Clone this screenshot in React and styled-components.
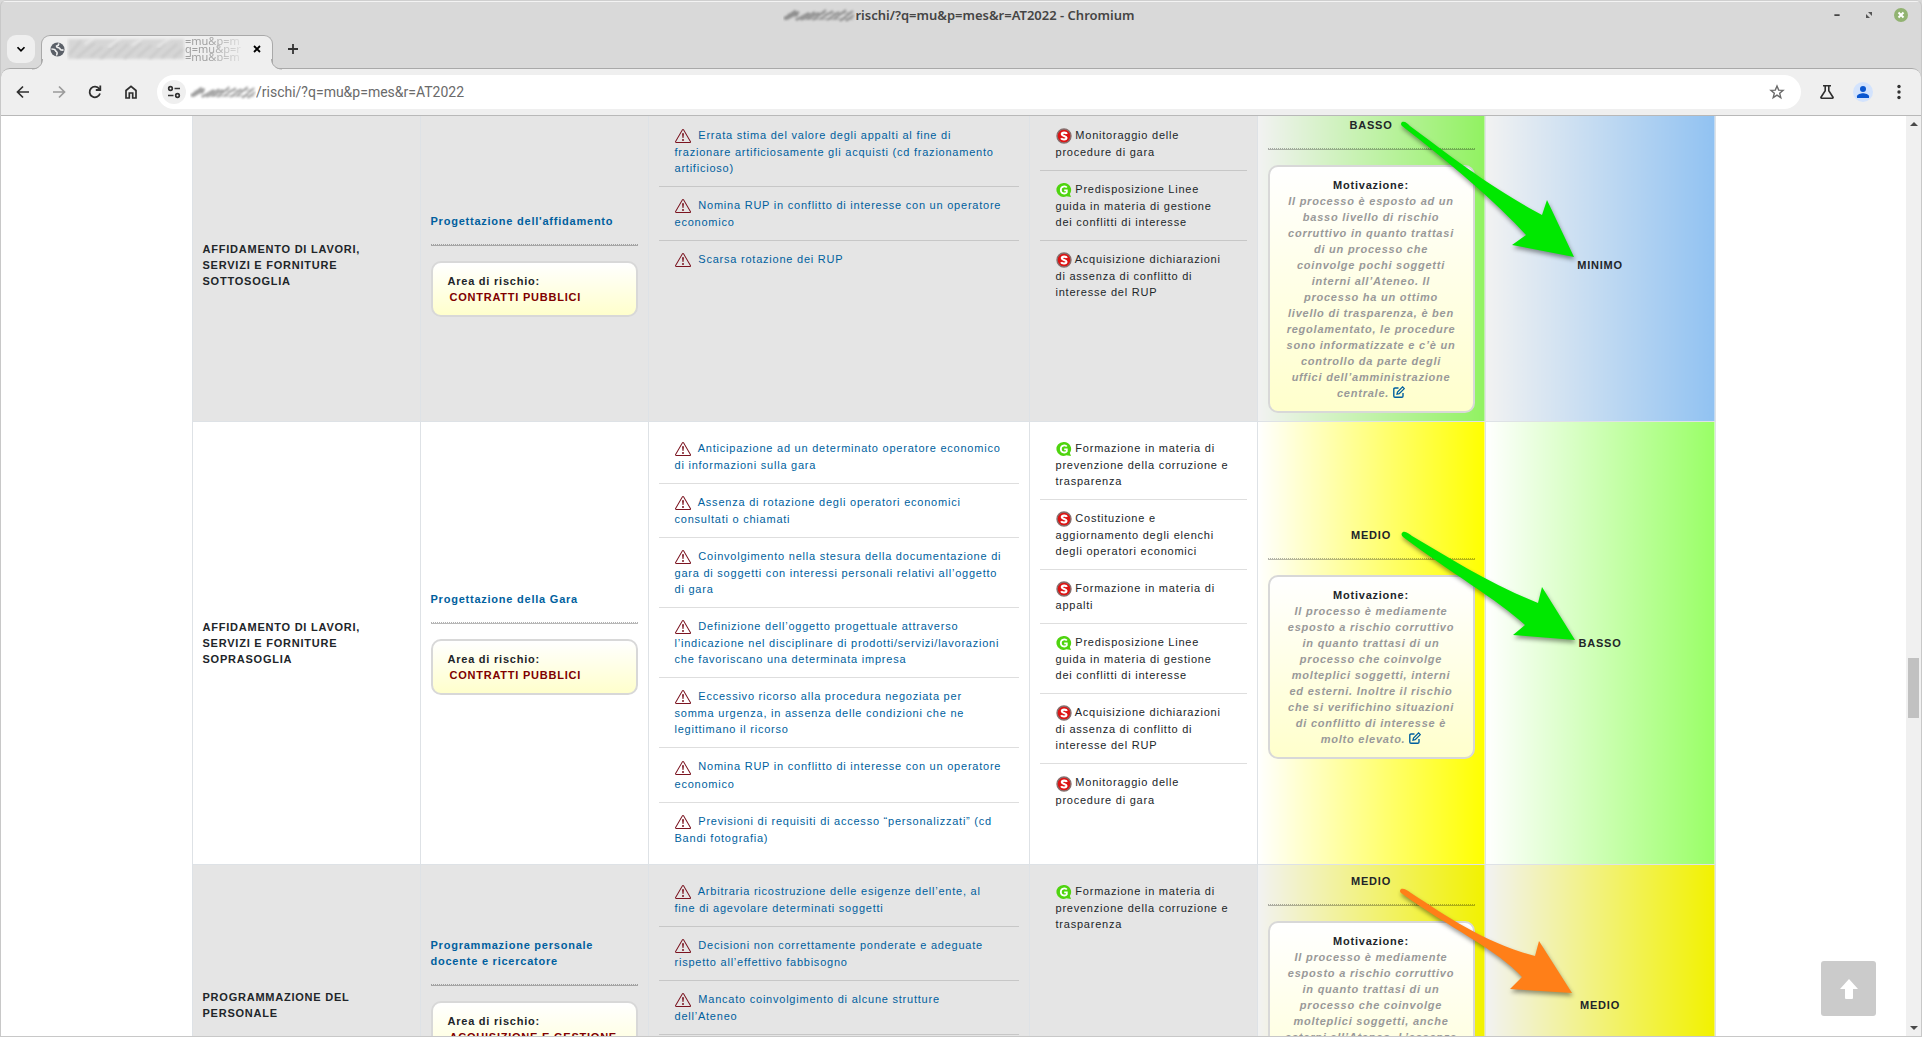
import React from "react";
import styled, { createGlobalStyle, css } from "styled-components";

const GlobalStyle = createGlobalStyle`
  * { box-sizing: border-box; }
  html, body, #root { height: 100%; }
  body { margin: 0; overflow: hidden; background: #d9d9d9; }
  button { padding: 0; border: 0; background: none; color: inherit; font: inherit; cursor: pointer; }
  a { text-decoration: none; }
`;

const uiFont = css`font-family: "Noto Sans", "Open Sans", sans-serif;`;

/* ---------- browser window ---------- */

const Window = styled.div`
  ${uiFont}
  height: 100vh;
  display: flex;
  flex-direction: column;
  background: #d9d9d9;
  border: 1px solid #c8c8c8;
  border-top-color: #cfcfcf;
  border-radius: 6px 6px 0 0;
  overflow: hidden;
`;

const TitleBar = styled.header`
  display: grid;
  grid-template-columns: 1fr auto 1fr;
  align-items: center;
  height: 27px;
  padding-right: 4px;
  border-top: 1px solid #f3f3f3;
  color: #454545;
`;

const Title = styled.h1`
  grid-column: 2;
  display: flex;
  align-items: center;
  margin: 0;
  font-size: 13px;
  line-height: 18px;
  font-weight: 600;
  white-space: nowrap;
`;

const WindowControls = styled.div`
  display: flex;
  justify-content: flex-end;
  gap: 18px;
  padding-right: 9px;
`;

const ControlButton = styled.button`
  display: grid;
  place-items: center;
  width: 14px;
  height: 14px;
`;

const TabStrip = styled.nav`
  display: flex;
  align-items: center;
  height: 40px;
  padding: 7px 0 0 6px;
`;

const TabSearch = styled.button`
  display: grid;
  place-items: center;
  width: 28px;
  height: 28px;
  margin-bottom: 5px;
  border-radius: 9px;
  background: #efefef;
`;

const Tab = styled.div`
  position: relative;
  z-index: 1;
  display: flex;
  align-items: center;
  gap: 2px;
  width: 232px;
  height: 34px;
  margin: 0 12px 0 6px;
  padding: 0 7px 6px 8px;
  border: 1px solid #a9a9a9;
  border-bottom: 0;
  border-radius: 9px 9px 0 0;
  background: #efefef;
`;

const TabFoot = styled.svg`
  position: absolute;
  bottom: -1px;
  ${(p) => (p.$side === "left" ? "left: -10px;" : "right: -10px; transform: scaleX(-1);")}
`;

const TabTitle = styled.div`
  display: flex;
  flex: 1;
  align-items: center;
  color: #a0a0a0;
  font-size: 11px;
`;

const TabTitleText = styled.span`
  white-space: nowrap;
  line-height: 8px;
  mask-image: linear-gradient(90deg, #000 40%, rgba(0, 0, 0, 0.2));
`;

const SmallButton = styled.button`
  display: grid;
  place-items: center;
  width: 16px;
  height: 28px;
`;

const NewTab = styled(SmallButton)`
  margin-bottom: 6px;
  color: #333;
`;

const Toolbar = styled.div`
  display: flex;
  align-items: center;
  height: 48px;
  padding: 0 10px 0 10px;
  border-top: 1px solid #a9a9a9;
  border-bottom: 1px solid #b8b8b8;
  border-radius: 9px 9px 0 0;
  background: #efefef;
`;

const ToolButton = styled.button`
  display: grid;
  place-items: center;
  width: 24px;
  height: 24px;
  margin-right: 12px;
  color: ${(p) => (p.$dim ? "#9b9b9b" : "#2f2f2f")};
  &:last-child { margin-right: 0; }
`;

const AddressBar = styled.form`
  display: flex;
  flex: 1;
  align-items: center;
  height: 34px;
  margin: 0 14px 0 2px;
  padding: 0 12px 0 5px;
  border-radius: 17px;
  background: #fff;
`;

const SiteButton = styled.button`
  display: grid;
  place-items: center;
  width: 24px;
  height: 24px;
  margin-right: 4px;
  border-radius: 12px;
  background: #efefef;
`;

const AddressInput = styled.input`
  flex: 1;
  min-width: 0;
  padding: 0;
  border: 0;
  outline: 0;
  background: none;
  color: #6a6a6a;
  font-family: Roboto, "Noto Sans", sans-serif;
  font-size: 14px;
  line-height: 20px;
`;

const StarButton = styled.button`
  display: grid;
  place-items: center;
  width: 24px;
  height: 24px;
  color: #6a6a6a;
`;

/* ---------- page ---------- */

const Viewport = styled.div`
  display: flex;
  flex: 1;
  min-height: 0;
  background: #fff;
`;

const Page = styled.main`
  position: relative;
  flex: 1;
  overflow: hidden;
`;

const ScrollTrack = styled.div`
  display: flex;
  flex-direction: column;
  align-items: center;
  width: 15px;
  padding: 6px 0;
  background: #f0f0f0;
`;

const ScrollThumb = styled.div`
  width: 11px;
  height: 60px;
  background: #c1c1c1;
`;

const Spacer = styled.div`
  flex: ${(p) => p.$grow};
`;

const ScrollArrow = styled.div`
  width: 0;
  height: 0;
  border: 4px solid transparent;
  border-width: ${(p) => (p.$down ? "4px 4px 0" : "0 4px 4px")};
  border-${(p) => (p.$down ? "top" : "bottom")}-color: #4a4a4a;
`;

const BackToTop = styled.button`
  position: absolute;
  right: 30px;
  bottom: 20px;
  display: grid;
  place-items: center;
  width: 55px;
  height: 55px;
  border-radius: 3px;
  background: #cbcbcb;
`;

const RiskTable = styled.table`
  width: 80%;
  margin: -8px auto 0;
  border-collapse: collapse;
  table-layout: fixed;
  color: #212529;
  font-family: "Liberation Sans", Arial, sans-serif;
  font-size: 11px;
  line-height: 16px;
  letter-spacing: 0.07em;
`;

/* Columns are shares of the table, rounded down so that borders stay crisp;
   the last column takes what is left. */
const Column = styled.col`
  width: ${(p) => (p.$share ? `round(down, calc((100vw - 17px) * 0.8 * ${p.$share}), 1px)` : "auto")};
`;

const Row = styled.tr`
  background: ${(p) => (p.$shaded ? "#e5e5e5" : "#fff")};
`;

const cell = css`
  padding: 8px 10px;
  border: 1px solid #dee2e6;
  vertical-align: middle;
  text-align: left;
`;

const HeadCell = styled.th`
  ${cell}
  font-weight: 700;
`;

const Cell = styled.td`
  ${cell}
`;

const ListCell = styled(Cell)`
  vertical-align: top;
`;

const LEVELS = {
  plain: { minimo: "#99ccff", basso: "#99ff66", medio: "#ffff00" },
  shaded: { minimo: "#91c2f2", basso: "#91f261", medio: "#f2f200" },
};

const LevelCell = styled(Cell)`
  position: relative;
  text-align: center;
  font-weight: 700;
  background: linear-gradient(
    90deg,
    ${(p) => (p.$shaded ? "#f2f2f2" : "#fff")},
    ${(p) => LEVELS[p.$shaded ? "shaded" : "plain"][p.$level]}
  );
`;

const Rule = styled.hr`
  height: 2px;
  margin: 15px 0;
  border: 0;
  border-top: 1px dotted rgba(0, 0, 0, 0.3);
  border-bottom: 1px solid rgba(0, 0, 0, 0.27);
`;

const Card = styled.div`
  padding: 10px 15px;
  border: 2px solid #d8d8d8;
  border-radius: 10px;
  background: linear-gradient(#fff, #ffffcc);
  font-weight: 700;
`;

const Area = styled.div`
  padding-left: 2px;
  color: #800000;
`;

const Reason = styled.em`
  display: block;
  color: #999;
`;

const ProcessLink = styled.a`
  color: #005f9e;
  font-weight: 700;
`;

const List = styled.ul`
  margin: 0;
  padding: 0;
  list-style: none;
`;

const Item = styled.li`
  padding: 10px 16px;
  border-bottom: 1px solid rgba(0, 0, 0, 0.13);
  &:last-child { border-bottom: 0; }
  svg { vertical-align: middle; margin-right: ${(p) => p.$gap}px; }
`;

const RiskLink = styled.a`
  color: #005f9e;
`;

const EditLink = styled.a`
  color: #005f9e;
  svg { vertical-align: -1px; }
`;

const ArrowLayer = styled.svg`
  position: absolute;
  left: 140px;
  top: ${(p) => p.$top}px;
  z-index: 2;
  overflow: visible;
  pointer-events: none;
  filter: drop-shadow(1px 3px 2px rgba(0, 0, 0, 0.4));
`;

/* ---------- drawings ---------- */

const WarningIcon = () => (
  <svg width="16" height="16" viewBox="0 0 16 16" fill="#7b1420" aria-hidden="true">
    <path d="M7.938 2.016A.13.13 0 0 1 8.002 2a.13.13 0 0 1 .063.016.15.15 0 0 1 .054.057l6.857 11.667c.036.06.035.124.002.183a.2.2 0 0 1-.054.06.1.1 0 0 1-.066.017H1.146a.1.1 0 0 1-.066-.017.2.2 0 0 1-.054-.06.18.18 0 0 1 .002-.183L7.884 2.073a.15.15 0 0 1 .054-.057m1.044-.45a1.13 1.13 0 0 0-1.96 0L.165 13.233c-.457.778.091 1.767.98 1.767h13.713c.889 0 1.438-.99.98-1.767z" />
    <path d="M7.002 12a1 1 0 1 1 2 0 1 1 0 0 1-2 0M7.1 5.995a.905.905 0 1 1 1.8 0l-.35 3.507a.552.552 0 0 1-1.1 0z" />
  </svg>
);

const SpecificIcon = () => (
  <svg width="16" height="16" viewBox="0 0 16 16" aria-label="Misura specifica">
    <circle cx="8" cy="8" r="7" fill="#dd1414" stroke="#85706f" strokeWidth="1.400" />
    <path d="M10.900 5.800C10.200 4.200 5.800 4.100 5.800 6.200 5.800 8.300 10.500 7.500 10.500 9.800 10.500 11.900 6 11.900 5.100 10.200" fill="none" stroke="#fff" strokeWidth="2.100" />
  </svg>
);

const GeneralIcon = () => (
  <svg width="16" height="16" viewBox="0 0 16 16" aria-label="Misura generale">
    <path d="M7.500 1a7 7 0 1 0 3 13.300L15 15l-1.200-3A7 7 0 0 0 7.500 1z" fill="#4fd40f" />
    <path d="M10.800 5.600C9.600 3.700 4.800 4 4.800 8s4.800 4.200 6 2.200V8.300H8.200" fill="none" stroke="#fff" strokeWidth="1.800" />
  </svg>
);

const EditIcon = () => (
  <svg width="12" height="12" viewBox="0 0 12 12" fill="none" stroke="currentColor" strokeWidth="1.4" aria-label="Modifica">
    <path d="M5.500 2H2a1.200 1.200 0 0 0-1.200 1.200V10A1.200 1.200 0 0 0 2 11.200h6.800A1.200 1.200 0 0 0 10 10V7" />
    <path d="M4 8.200l.5-2.200L9.600.9l1.700 1.700L6.200 7.700z" strokeWidth="1.300" />
  </svg>
);

const ARROWS = {
  steep: "M4 4C7 3 9 5 12 8C50 36 90 68 144 97L149 82L176 139L114 127L128 117C100 86 50 43 4 8Q2 6 4 4Z",
  flat: "M5 2C8 1 11 4 14 6C50 27 90 53 140 73L144 57L177 110L115 105L127 95C100 70 50 41 5 7Q2 4 5 2Z",
  low: "M3 3C6 2 9 4 13 7C50 31 85 56 137 70L141 55L174 107L112 103L124 91C100 64 50 41 3 7Q1 5 3 3Z",
};

const Arrow = ({ shape, color, top }) => (
  <ArrowLayer $top={top} width="180" height="142" aria-hidden="true">
    <path d={ARROWS[shape]} fill={color} />
  </ArrowLayer>
);

const Smudge = ({ width, height, id, tone }) => (
  <svg width={width} height={height} viewBox="0 0 72 16" preserveAspectRatio="none" aria-hidden="true">
    <filter id={id} x="-10%" y="-20%" width="120%" height="140%">
      <feGaussianBlur stdDeviation="1" />
    </filter>
    <g filter={`url(#${id})`} stroke={tone} strokeWidth="2" fill="none" opacity="0.75">
      <path d="M1 12L13 4M3 12L16 5M5 8h10" strokeWidth="3" />
      <path d="M13 13L26 6M18 13L32 5M24 12L36 6M30 13L43 3M37 12L50 4M44 13L56 5M51 12L63 3M57 14L70 4M63 14L71 8" />
      <path d="M12 12H70M26 7L68 6" opacity="0.5" />
    </g>
  </svg>
);

const TabSmudge = () => (
  <svg width="118" height="28" viewBox="0 0 120 28" aria-hidden="true">
    <filter id="smudge-tab" x="-5%" y="-10%" width="110%" height="120%">
      <feGaussianBlur stdDeviation="1.500" />
    </filter>
    <rect x="1" y="4" width="118" height="20" fill="#d6d6d6" filter="url(#smudge-tab)" />
    <g filter="url(#smudge-tab)" stroke="#c6c6c6" strokeWidth="2" fill="none">
      <path d="M2 20L14 6M10 23L28 8M24 22L36 12M34 24L52 8M48 22L62 9M58 24L76 7M72 22L86 10M84 24L100 8M96 23L112 9M108 23L118 14" />
    </g>
    <g filter="url(#smudge-tab)" stroke="#efefef" strokeWidth="2" fill="none">
      <path d="M18 9L27 3M42 12L54 3M66 10L76 4M92 12L104 3" />
    </g>
  </svg>
);

const Globe = () => (
  <svg width="15" height="15" viewBox="0 0 16 16" aria-hidden="true">
    <circle cx="8" cy="8" r="7.500" fill="#5b6068" />
    <path d="M9 1.500c.8 1.500-.5 2.500-2 2.800-.3 1.400 1 1.700 2.300 1.900 1.700.4 1.300 2.300 3 2.400 1 .1 1.700-.2 2-.6M1.500 7.500c1.800 0 4 .2 4.500 1.800.3 1.200 1.800 1 1.600 2.600-.1 1-.6 1.700-.4 2.500" fill="none" stroke="#efefef" strokeWidth="1.700" />
  </svg>
);

const Stroke = ({ d, size = 16, width = 2 }) => (
  <svg width={size} height={size} viewBox="0 0 16 16" fill="none" stroke="currentColor" strokeWidth={width} aria-hidden="true">
    <path d={d} />
  </svg>
);

const Foot = ({ side }) => (
  <TabFoot $side={side} width="11" height="11" viewBox="0 0 11 11" aria-hidden="true">
    <path d="M0 11V10.500C6 10.500 10.500 6 10.500 0H11V11Z" fill="#efefef" />
    <path d="M0 10C6 10 10.500 6 10.500 0" fill="none" stroke="#a9a9a9" />
  </TabFoot>
);

/* ---------- data ---------- */

const ROWS = [
  {
    shaded: true,
    macro: "AFFIDAMENTO DI LAVORI, SERVIZI E FORNITURE SOTTOSOGLIA",
    process: "Progettazione dell'affidamento",
    area: "CONTRATTI PUBBLICI",
    risks: [
      "Errata stima del valore degli appalti al fine di frazionare artificiosamente gli acquisti (cd frazionamento artificioso)",
      "Nomina RUP in conflitto di interesse con un operatore economico",
      "Scarsa rotazione dei RUP",
    ],
    measures: [
      ["S", "Monitoraggio delle procedure di gara"],
      ["G", "Predisposizione Linee guida in materia di gestione dei conflitti di interesse"],
      ["S", "Acquisizione dichiarazioni di assenza di conflitto di interesse del RUP"],
    ],
    before: "basso",
    after: "minimo",
    reason:
      "Il processo è esposto ad un basso livello di rischio corruttivo in quanto trattasi di un processo che coinvolge pochi soggetti interni all’Ateneo. Il processo ha un ottimo livello di trasparenza, è ben regolamentato, le procedure sono informatizzate e c’è un controllo da parte degli uffici dell’amministrazione centrale.",
    arrow: { shape: "steep", color: "#00e800", top: 9 },
  },
  {
    shaded: false,
    macro: "AFFIDAMENTO DI LAVORI, SERVIZI E FORNITURE SOPRASOGLIA",
    process: "Progettazione della Gara",
    area: "CONTRATTI PUBBLICI",
    risks: [
      "Anticipazione ad un determinato operatore economico di informazioni sulla gara",
      "Assenza di rotazione degli operatori economici consultati o chiamati",
      "Coinvolgimento nella stesura della documentazione di gara di soggetti con interessi personali relativi all’oggetto di gara",
      "Definizione dell’oggetto progettuale attraverso l’indicazione nel disciplinare di prodotti/servizi/lavorazioni che favoriscano una determinata impresa",
      "Eccessivo ricorso alla procedura negoziata per somma urgenza, in assenza delle condizioni che ne legittimano il ricorso",
      "Nomina RUP in conflitto di interesse con un operatore economico",
      "Previsioni di requisiti di accesso “personalizzati” (cd Bandi fotografia)",
    ],
    measures: [
      ["G", "Formazione in materia di prevenzione della corruzione e trasparenza"],
      ["S", "Costituzione e aggiornamento degli elenchi degli operatori economici"],
      ["S", "Formazione in materia di appalti"],
      ["G", "Predisposizione Linee guida in materia di gestione dei conflitti di interesse"],
      ["S", "Acquisizione dichiarazioni di assenza di conflitto di interesse del RUP"],
      ["S", "Monitoraggio delle procedure di gara"],
    ],
    before: "medio",
    after: "basso",
    reason:
      "Il processo è mediamente esposto a rischio corruttivo in quanto trattasi di un processo che coinvolge molteplici soggetti, interni ed esterni. Inoltre il rischio che si verifichino situazioni di conflitto di interesse è molto elevato.",
    arrow: { shape: "flat", color: "#00e800", top: 108 },
  },
  {
    shaded: true,
    macro: "PROGRAMMAZIONE DEL PERSONALE",
    process: "Programmazione personale docente e ricercatore",
    area: "ACQUISIZIONE E GESTIONE DEL PERSONALE",
    risks: [
      "Arbitraria ricostruzione delle esigenze dell’ente, al fine di agevolare determinati soggetti",
      "Decisioni non correttamente ponderate e adeguate rispetto all’effettivo fabbisogno",
      "Mancato coinvolgimento di alcune strutture dell’Ateneo",
      "Scarsa trasparenza",
    ],
    measures: [["G", "Formazione in materia di prevenzione della corruzione e trasparenza"]],
    before: "medio",
    after: "medio",
    reason:
      "Il processo è mediamente esposto a rischio corruttivo in quanto trattasi di un processo che coinvolge molteplici soggetti, anche esterni all’Ateneo. L’assenza di criteri definiti può incidere sulle scelte, ma le decisioni sono prese da organi collegiali e gli atti sono pubblici.",
    arrow: { shape: "low", color: "#ff7f18", top: 21 },
  },
];

const RiskRow = ({ row }) => (
  <Row $shaded={row.shaded}>
    <HeadCell scope="row">{row.macro}</HeadCell>
    <Cell>
      <ProcessLink href="#processo">{row.process}</ProcessLink>
      <Rule />
      <Card>
        Area di rischio:
        <Area>{row.area}</Area>
      </Card>
    </Cell>
    <ListCell>
      <List>
        {row.risks.map((risk) => (
          <Item key={risk} $gap={4}>
            <WarningIcon /> <RiskLink href="#rischio">{risk}</RiskLink>
          </Item>
        ))}
      </List>
    </ListCell>
    <ListCell>
      <List>
        {row.measures.map(([kind, text]) => (
          <Item key={text} $gap={0}>
            {kind === "S" ? <SpecificIcon /> : <GeneralIcon />} {text}
          </Item>
        ))}
      </List>
    </ListCell>
    <LevelCell $shaded={row.shaded} $level={row.before}>
      {row.before.toUpperCase()}
      <Rule />
      <Card>
        Motivazione:
        <Reason>
          {row.reason}{" "}
          <EditLink href="#modifica"><EditIcon /></EditLink>
        </Reason>
      </Card>
      <Arrow {...row.arrow} />
    </LevelCell>
    <LevelCell $shaded={row.shaded} $level={row.after}>{row.after.toUpperCase()}</LevelCell>
  </Row>
);

export default function App() {
  return (
    <>
      <GlobalStyle />
      <Window>
        <TitleBar>
          <Title>
            <Smudge id="smudge-title" width={72} height={16} tone="#777" />
            rischi/?q=mu&amp;p=mes&amp;r=AT2022 - Chromium
          </Title>
          <WindowControls>
            <ControlButton aria-label="Riduci a icona"><Stroke d="M5 8h6" size={14} /></ControlButton>
            <ControlButton aria-label="Ingrandisci">
              <svg width="14" height="14" viewBox="0 0 14 14" fill="#555" aria-hidden="true">
                <path d="M6 4h4v4zM4 6v4h4z" />
              </svg>
            </ControlButton>
            <ControlButton aria-label="Chiudi">
              <svg width="14" height="14" viewBox="0 0 14 14" aria-hidden="true">
                <circle cx="7" cy="7" r="7" fill="#92b372" />
                <path d="M4.500 4.500l5 5M9.500 4.500l-5 5" stroke="#fff" strokeWidth="2" />
              </svg>
            </ControlButton>
          </WindowControls>
        </TitleBar>
        <TabStrip>
          <TabSearch aria-label="Cerca schede"><Stroke d="M4 6L8 10l4-4" size={14} /></TabSearch>
          <Tab>
            <Foot side="left" />
            <Globe />
            <TabTitle>
              <TabSmudge />
              <TabTitleText>=mu&amp;p=m<br />q=mu&amp;p=r<br />=mu&amp;p=m</TabTitleText>
            </TabTitle>
            <SmallButton aria-label="Chiudi scheda"><Stroke d="M4 4l8 8M12 4l-8 8" size={12} width={2.4} /></SmallButton>
            <Foot side="right" />
          </Tab>
          <NewTab aria-label="Nuova scheda"><Stroke d="M8 3v10M3 8h10" width={1.800} /></NewTab>
        </TabStrip>
        <Toolbar>
          <ToolButton aria-label="Indietro"><Stroke d="M14 8H3M8 2.500L2.500 8L8 13.500" width={1.700} /></ToolButton>
          <ToolButton $dim aria-label="Avanti"><Stroke d="M2 8h11M8 2.500L13.500 8L8 13.500" width={1.700} /></ToolButton>
          <ToolButton aria-label="Ricarica"><Stroke d="M13 9.500A5.300 5.300 0 1 1 12.300 5M13.300 1.500V6H8.800" width={1.800} /></ToolButton>
          <ToolButton aria-label="Pagina iniziale"><Stroke d="M3 14V6.500L8 2.300l5 4.200V14H9.700V9H6.300v5Z" width={1.700} /></ToolButton>
          <AddressBar onSubmit={(e) => e.preventDefault()}>
            <SiteButton type="button" aria-label="Informazioni sul sito">
              <svg width="16" height="16" viewBox="0 0 16 16" fill="none" stroke="#333" strokeWidth="1.700" aria-hidden="true">
                <circle cx="4.500" cy="4.500" r="1.800" /><path d="M8.500 4.500H14M2 11.500h5.500" /><circle cx="11.500" cy="11.500" r="1.800" />
              </svg>
            </SiteButton>
            <Smudge id="smudge-url" width={66} height={16} tone="#808080" />
            <AddressInput aria-label="Indirizzo" defaultValue="/rischi/?q=mu&p=mes&r=AT2022" />
            <StarButton type="button" aria-label="Aggiungi ai preferiti">
              <Stroke d="M8 2l1.700 4.100 4.400.3-3.400 2.900 1.100 4.300L8 11.200l-3.800 2.400 1.100-4.300L1.900 6.400l4.400-.3Z" width={1.400} />
            </StarButton>
          </AddressBar>
          <ToolButton aria-label="Esperimenti"><Stroke d="M4 1.800h8M6.200 2v4.800L2 13.200c-.3.600 0 1 .6 1h10.800c.6 0 .9-.4.600-1L9.800 6.800V2" width={1.600} /></ToolButton>
          <ToolButton aria-label="Profilo">
            <svg width="20" height="20" viewBox="0 0 20 20" aria-hidden="true">
              <circle cx="10" cy="10" r="10" fill="#d3e3fd" />
              <circle cx="10" cy="7" r="3" fill="#0b57d0" />
              <path d="M4 16v-1.700C4 12.200 8 11.300 10 11.300s6 .9 6 3V16z" fill="#0b57d0" />
            </svg>
          </ToolButton>
          <ToolButton aria-label="Menu">
            <svg width="16" height="16" viewBox="0 0 16 16" fill="#333" aria-hidden="true">
              <circle cx="8" cy="2.500" r="1.700" /><circle cx="8" cy="8" r="1.700" /><circle cx="8" cy="13.500" r="1.700" />
            </svg>
          </ToolButton>
        </Toolbar>
        <Viewport>
          <Page>
            <RiskTable>
              <colgroup>
                <Column $share={0.15} />
                <Column $share={0.15} />
                <Column $share={0.25} />
                <Column $share={0.15} />
                <Column $share={0.15} />
                <Column />
              </colgroup>
              <tbody>
                {ROWS.map((row) => <RiskRow key={row.macro} row={row} />)}
              </tbody>
            </RiskTable>
            <BackToTop aria-label="Torna su">
              <svg width="18" height="20" viewBox="0 0 18 20" fill="#fff" aria-hidden="true">
                <path d="M9 0L18 10H13V19Q13 20 12 20H6Q5 20 5 19V10H0Z" />
              </svg>
            </BackToTop>
          </Page>
          <ScrollTrack>
            <ScrollArrow />
            <Spacer $grow={533} />
            <ScrollThumb />
            <Spacer $grow={309} />
            <ScrollArrow $down />
          </ScrollTrack>
        </Viewport>
      </Window>
    </>
  );
}
